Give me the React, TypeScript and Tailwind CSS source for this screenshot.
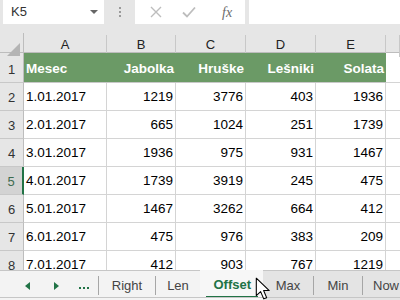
const cols = ['A', 'B', 'C', 'D', 'E', ''];
const header = ['Mesec', 'Jabolka', 'Hruške', 'Lešniki', 'Solata'];
const rows: (string | number)[][] = [
  ['1.01.2017', 1219, 3776, 403, 1936],
  ['2.01.2017', 665, 1024, 251, 1739],
  ['3.01.2017', 1936, 975, 931, 1467],
  ['4.01.2017', 1739, 3919, 245, 475],
  ['5.01.2017', 1467, 3262, 664, 412],
  ['6.01.2017', 475, 976, 383, 209],
  ['7.01.2017', 412, 903, 767, 1219],
];

const gridCols = 'grid grid-cols-[24px_83px_69px_70px_70px_70px_1fr]';

function FormulaBar() {
  return (
    <div className="h-[33px] bg-[#e6e6e6] flex items-start">
      <div className="ml-[3px] w-[101px] h-[24px] bg-white flex items-center justify-between pl-[8px] pr-[6px] text-[13px] text-[#333]">
        <span>K5</span>
        <span className="w-0 h-0 border-l-[4px] border-r-[4px] border-t-[4px] border-l-transparent border-r-transparent border-t-[#666]" />
      </div>
      <div className="w-[31px] h-[24px] flex flex-col items-center justify-center gap-[2px]">
        <span className="w-[2px] h-[2px] bg-[#9a9a9a]" />
        <span className="w-[2px] h-[2px] bg-[#9a9a9a]" />
        <span className="w-[2px] h-[2px] bg-[#9a9a9a]" />
      </div>
      <div className="w-[110px] h-[24px] bg-white flex items-center">
        <svg width="12" height="12" viewBox="0 0 12 12" className="ml-[15px]">
          <path d="M1 1 L11 11 M11 1 L1 11" stroke="#bdbdbd" strokeWidth="1.4" fill="none" />
        </svg>
        <svg width="14" height="12" viewBox="0 0 14 12" className="ml-[20px]">
          <path d="M1 6.5 L5 10.5 L13 1.5" stroke="#bdbdbd" strokeWidth="1.8" fill="none" />
        </svg>
        <span className="ml-[26px] italic text-[14px] text-[#6b6b6b] font-['Liberation_Serif',serif]">fx</span>
      </div>
      <div className="ml-[4px] flex-1 h-[24px] bg-white" />
    </div>
  );
}

function ColumnHeader() {
  return (
    <div className={`${gridCols} h-[20px] bg-[#e6e6e6] border-b border-[#bdbdbd]`}>
      <div className="relative border-r border-[#bdbdbd]">
        <svg width="13" height="13" viewBox="0 0 13 13" className="absolute right-[3px] bottom-[1px]">
          <path d="M13 0 L13 13 L0 13 Z" fill="#b4b4b4" />
        </svg>
      </div>
      {cols.map((c, i) => (
        <div key={i} className="flex items-end justify-center pb-[2px] text-[13px] text-[#222] border-r border-[#c8c8c8] mt-[2px]">
          {c}
        </div>
      ))}
    </div>
  );
}

function RowNum({ n, active }: { n: number; active?: boolean }) {
  return (
    <div
      className={`flex items-end justify-center pb-[3px] text-[13px] border-b border-[#c8c8c8] ${
        active ? 'bg-[#d3d3d3] text-[#3d6b4f] border-r-2 border-r-[#217346]' : 'bg-[#e6e6e6] text-[#333] border-r border-r-[#bdbdbd]'
      }`}
    >
      {n}
    </div>
  );
}

function Sheet() {
  return (
    <div className="h-[217px] overflow-hidden bg-white font-['Liberation_Sans',sans-serif]">
      <div className={`${gridCols} h-[30px]`}>
        <RowNum n={1} />
        {header.map((h, i) => (
          <div
            key={h}
            className={`bg-[#6b9a66] text-white font-bold text-[13.5px] flex items-center pt-[4px] border-b border-[#c8c8c8] ${
              i === 0 ? 'justify-start pl-[2px]' : 'justify-end pr-[2px]'
            }`}
          >
            {h}
          </div>
        ))}
        <div className="border-b border-[#d4d4d4]" />
      </div>
      {rows.map((r, ri) => (
        <div key={ri} className={`${gridCols} h-[28px]`}>
          <RowNum n={ri + 2} active={ri + 2 === 5} />
          {r.map((v, ci) => (
            <div
              key={ci}
              className={`text-[13.5px] text-black flex items-center pt-[2px] border-r border-b border-[#d4d4d4] ${
                ci === 0 ? 'justify-start pl-[2px]' : 'justify-end pr-[2px]'
              }`}
            >
              {v}
            </div>
          ))}
          <div className="border-b border-[#d4d4d4]" />
        </div>
      ))}
    </div>
  );
}

function Tabs() {
  return (
    <div className="relative h-[30px] bg-[#f3f3f3] border-t border-[#c6c6c6] flex items-stretch text-[13px] text-[#444] font-['Liberation_Sans',sans-serif]">
      <div className="w-[98px] flex items-center">
        <svg width="5" height="8" viewBox="0 0 5 8" className="ml-[25px]">
          <path d="M5 0 L5 8 L0 4 Z" fill="#217346" />
        </svg>
        <svg width="5" height="8" viewBox="0 0 5 8" className="ml-[24px]">
          <path d="M0 0 L0 8 L5 4 Z" fill="#217346" />
        </svg>
        <span className="ml-[20px] flex gap-[2px] mt-[4px]">
          <span className="w-[2px] h-[2px] bg-[#217346]" />
          <span className="w-[2px] h-[2px] bg-[#217346]" />
          <span className="w-[2px] h-[2px] bg-[#217346]" />
        </span>
      </div>
      <div className="w-[57px] flex items-center justify-center my-[5px] border-l border-[#a6a6a6]">Right</div>
      <div className="w-[45px] flex items-center justify-center my-[5px] border-l border-[#a6a6a6]">Len</div>
      <div className="w-[63px] -mt-px bg-[#f7f7f7] flex flex-col items-center justify-center">
        <span className="font-bold text-[#217346] pt-[3px] px-[8px] pb-[2px] border-b-2 border-[#217346] w-[52px] text-center">Offset</span>
      </div>
      <div className="flex-1 flex bg-[#e4e4e4]">
        <div className="w-[50px] flex items-center justify-center">Max</div>
        <div className="w-[49px] flex items-center justify-center my-[5px] border-l border-[#a6a6a6]">Min</div>
        <div className="flex-1 flex items-center pl-[10px] my-[5px] border-l border-[#a6a6a6] overflow-hidden whitespace-nowrap">Now</div>
      </div>
      <div className="absolute left-0 right-0 bottom-[2px] h-px bg-[#c6c6c6]" />
      <svg width="17" height="24" viewBox="0 0 14 20" className="absolute left-[255px] top-[6px]">
        <path d="M1 1 L1 15.5 L4.6 12.2 L7.2 18.2 L9.6 17.2 L7.1 11.3 L11.8 11.3 Z" fill="white" stroke="black" strokeWidth="0.9" strokeLinejoin="round" />
      </svg>
    </div>
  );
}

export default function App() {
  return (
    <div className="w-[400px] h-[300px] overflow-hidden bg-white font-['Liberation_Sans',sans-serif]">
      <FormulaBar />
      <ColumnHeader />
      <Sheet />
      <Tabs />
    </div>
  );
}
